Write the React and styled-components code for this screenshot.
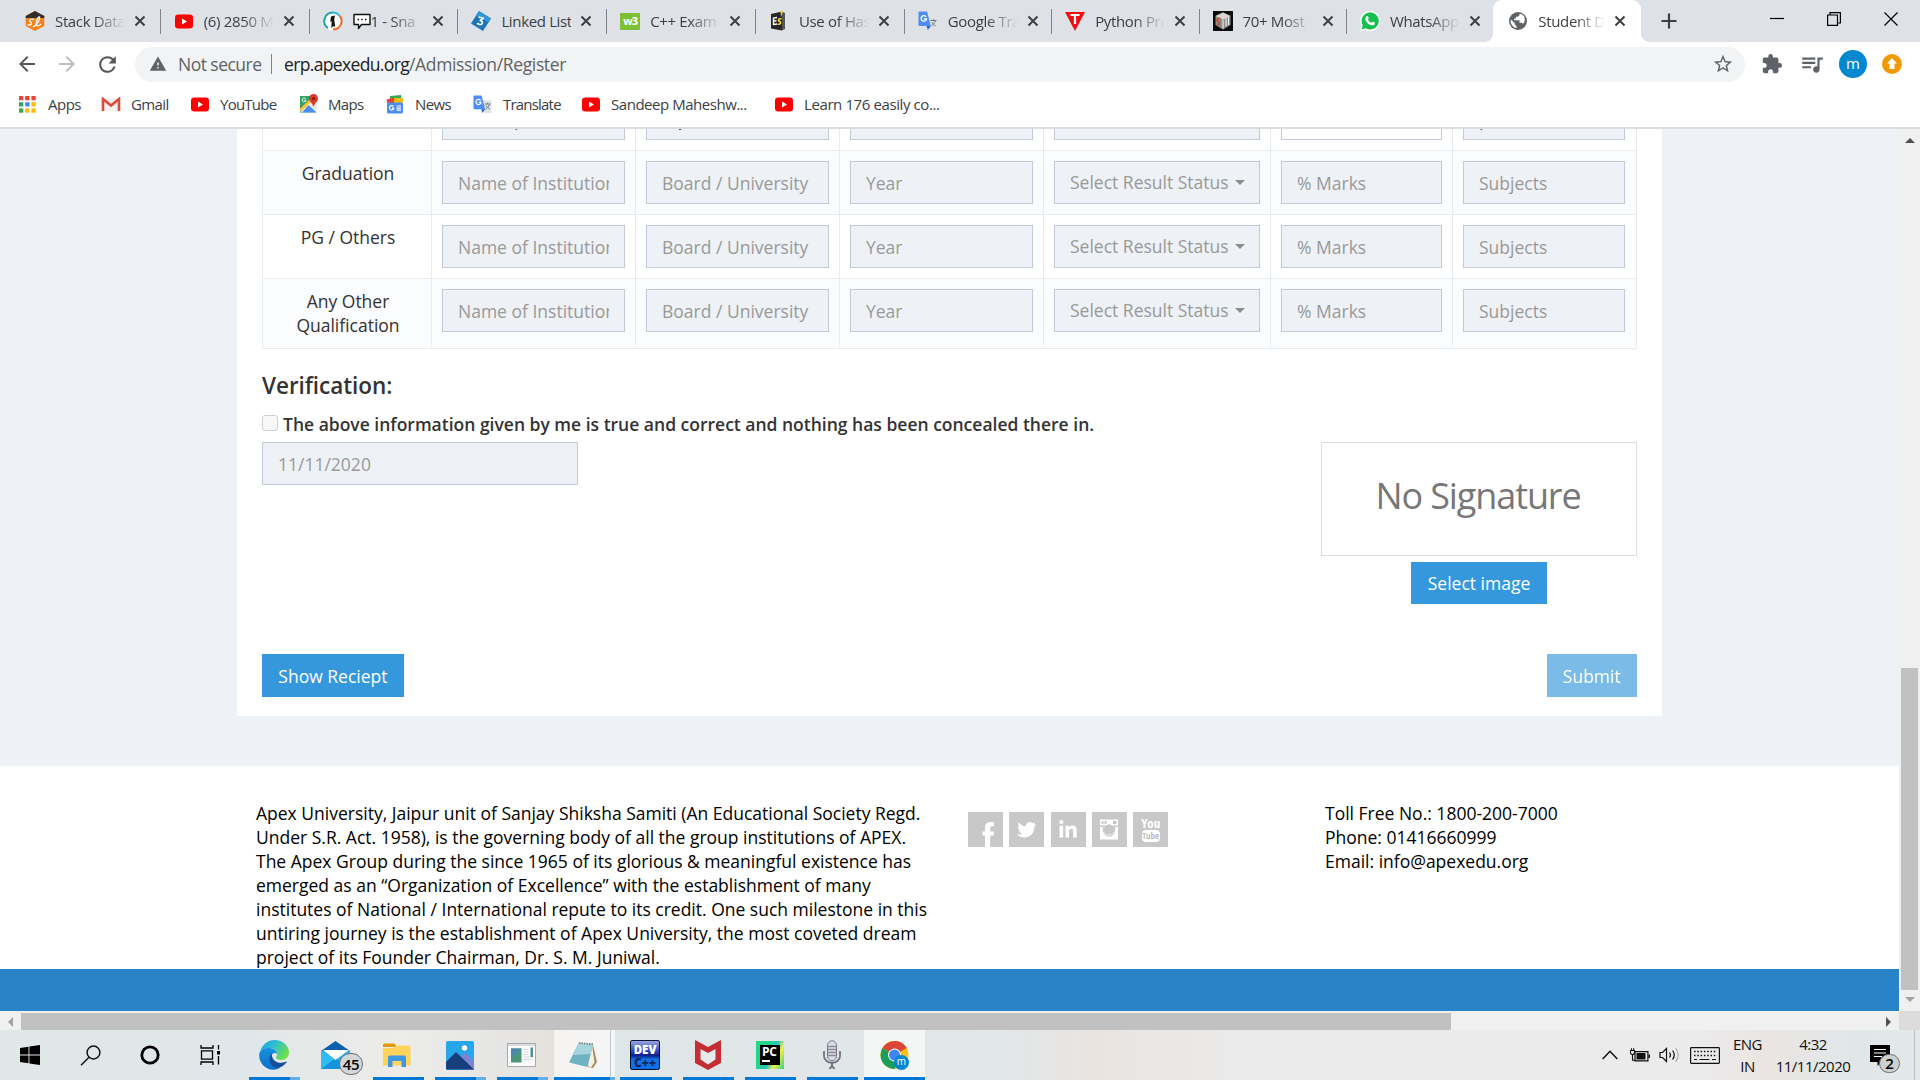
import React from "react";
import styled, { createGlobalStyle, css } from "styled-components";
import {
  MdArrowBack,
  MdArrowForward,
  MdRefresh,
  MdWarning,
  MdStarBorder,
  MdExtension,
  MdQueueMusic,
} from "react-icons/md";
import { FaLinkedinIn } from "react-icons/fa";

const GlobalStyle = createGlobalStyle`
  *, *::before, *::after { box-sizing: border-box; }
  body { margin: 0; font-family: "Open Sans", "Noto Sans", sans-serif; overflow: hidden; }
  svg { display: block; flex: none; }
`;

const Screen = styled.div`
  width: 1920px;
  height: 1080px;
  display: flex;
  flex-direction: column;
  overflow: hidden;
  background: #fff;
`;

/* ---------- browser chrome ---------- */

const TabStrip = styled.div`
  height: 42px;
  flex: none;
  display: flex;
  padding-left: 12px;
  background: #dee1e6;
`;

const Tab = styled.div`
  position: relative;
  width: ${(p) => p.$w}px;
  flex: none;
  display: flex;
  align-items: center;
  padding-left: 13px;
  ${(p) =>
    p.$divider &&
    css`
      &::after {
        content: "";
        position: absolute;
        right: 0;
        top: 9px;
        width: 1px;
        height: 25px;
        background: #80848a;
      }
    `}
  ${(p) =>
    p.$active &&
    css`
      background: #fff;
      border-radius: 9px 9px 0 0;
      padding-left: 15px;
      &::before,
      &::after {
        content: "";
        position: absolute;
        bottom: 0;
        width: 8px;
        height: 8px;
      }
      &::before {
        left: -8px;
        background: radial-gradient(circle at 0 0, transparent 7.5px, #fff 8px);
      }
      &::after {
        right: -8px;
        background: radial-gradient(circle at 100% 0, transparent 7.5px, #fff 8px);
      }
    `}
`;

const Favicon = styled.span`
  width: 20px;
  height: 20px;
  flex: none;
  display: flex;
  align-items: center;
  justify-content: center;
`;

const TabTitle = styled.span`
  width: ${(p) => (p.$active ? 67 : 70)}px;
  margin-left: 10px;
  display: flex;
  align-items: center;
  overflow: hidden;
  white-space: nowrap;
  font-size: 15px;
  line-height: 22px;
  letter-spacing: -0.35px;
  color: #3c4043;
  ${(p) =>
    p.$fade &&
    css`
      mask-image: linear-gradient(90deg, #000 55%, transparent 100%);
    `}
`;

const TabClose = styled.span`
  width: 12px;
  height: 12px;
  margin-left: 9px;
`;

const NewTab = styled.span`
  margin: 13px 0 0 20px;
`;

const WindowButtons = styled.div`
  margin-left: auto;
  width: 172px;
  height: 37px;
  display: flex;
  align-items: center;
`;

const WindowButton = styled.span`
  width: 57px;
  flex: none;
  display: flex;
  justify-content: center;
`;

const Toolbar = styled.div`
  height: 45px;
  flex: none;
  display: flex;
  align-items: center;
  padding: 0 18px 1px 15px;
  color: #5f6368;
`;

const NavButton = styled.span`
  width: 24px;
  margin-right: 16px;
  display: flex;
  justify-content: center;
  color: ${(p) => (p.$off ? "#bbbdc0" : "#54585d")};
`;

const Omnibox = styled.div`
  width: 1610px;
  height: 35px;
  border-radius: 18px;
  background: #f1f3f4;
  display: flex;
  align-items: center;
  padding: 0 11px 1px 14px;
  font-size: 17.5px;
  letter-spacing: -0.53px;
`;

const NotSecure = styled.span`
  margin-left: 11px;
  width: 93px;
`;

const OmniDivider = styled.span`
  width: 1px;
  height: 20px;
  margin-right: 12px;
  background: #80868b;
`;

const Host = styled.span`
  color: #202124;
  letter-spacing: -0.65px;
`;

const UrlPath = styled.span`
  flex: 1;
  letter-spacing: -0.35px;
`;

const ToolIcons = styled.div`
  margin-left: auto;
  display: flex;
  align-items: center;
`;

const ToolIcon = styled.span`
  margin-right: ${(p) => p.$gap}px;
`;

const Avatar = styled.span`
  width: 28px;
  height: 28px;
  border-radius: 50%;
  background: #0288d1;
  color: #fff;
  font-size: 15px;
  line-height: 26px;
  text-align: center;
  margin-right: 15px;
`;

const Bookmarks = styled.div`
  height: 42px;
  flex: none;
  display: flex;
  align-items: center;
  padding: 0 0 6px 19px;
  border-bottom: 2px solid #dadce0;
`;

const Bookmark = styled.span`
  width: ${(p) => p.$w}px;
  height: 22px;
  flex: none;
  display: flex;
  align-items: center;
  gap: ${(p) => p.$gap || 9}px;
  white-space: nowrap;
  font-size: 15px;
  letter-spacing: ${(p) => p.$ls || -0.4}px;
  color: #3c4043;
`;

/* ---------- page ---------- */

const Viewport = styled.div`
  height: 882px;
  flex: none;
  display: flex;
`;

const Page = styled.div`
  width: 1899px;
  height: 882px;
  display: flex;
  flex-direction: column;
  background: #eef1f5;
  color: #333;
  font-size: 17.5px;
  line-height: 24px;
  overflow: hidden;
`;

const Panel = styled.div`
  width: 1425px;
  height: 587px;
  flex: none;
  margin: 0 0 50px 237px;
  padding: 0 25px;
  background: #fff;
  display: flex;
  flex-direction: column;
`;

const Grid = styled.div`
  width: 1375px;
  border: solid #e7ecf1;
  border-width: 0 1px 1px;
  padding-bottom: 1px;
  flex: none;
`;

const GridRow = styled.div`
  display: grid;
  grid-template-columns: 169px 204px 204px 204px 227px 182px 183px;
  height: ${(p) => p.$h}px;
  background: ${(p) => (p.$striped ? "#fbfcfd" : "#fff")};
  border-top: ${(p) => (p.$partial ? 0 : 1)}px solid #e7ecf1;
  align-items: stretch;
  overflow: hidden;
`;

const Cell = styled.div`
  padding: 10px;
  border-right: 1px solid #e7ecf1;
  display: flex;
  flex-direction: column;
  min-width: 0;
  min-height: 0;
  ${(p) => p.$end && "justify-content: flex-end;"}
  &:last-child {
    border-right: 0;
    padding-right: 11px;
  }
`;

const LevelName = styled(Cell)`
  padding: 10px 9px 10px 11px;
  text-align: center;
`;

const fieldBox = css`
  width: 100%;
  height: 43px;
  flex: none;
  border: 1px solid #c2cad8;
  border-radius: 0;
  font: 400 17.5px/24px "Open Sans", "Noto Sans", sans-serif;
  outline: 0;
`;

const Field = styled.input`
  ${fieldBox}
  background: ${(p) => (p.$blank ? "#fff" : "#eef1f5")};
  padding: 1px 15px 0 ${(p) => p.$indent || 15}px;
  color: #555;
  &::placeholder {
    color: #999;
    opacity: 1;
  }
`;

const Select = styled.div`
  ${fieldBox}
  background: #eef1f5;
  color: #999;
  padding: 8px 14px 0 15px;
  display: flex;
  align-items: flex-start;
  justify-content: space-between;
  white-space: nowrap;
`;

const Caret = styled.span`
  margin-top: 10px;
  border: 5px solid transparent;
  border-top-color: #8d8d8d;
  border-bottom: 0;
`;

const Heading = styled.h3`
  margin: 21px 0 0;
  font-size: 22.5px;
  line-height: 32px;
  font-weight: 600;
  letter-spacing: -0.05px;
`;

const Declaration = styled.label`
  margin-top: 9px;
  display: flex;
  align-items: center;
  height: 26px;
  font-weight: 600;
  white-space: nowrap;
`;

const CheckBox = styled.span`
  width: 16px;
  height: 16px;
  margin: 0 5px 2px 0;
  border: 1px solid #d0d0d0;
  border-radius: 3px;
  background: #f8f8f8;
`;

const SignRow = styled.div`
  margin-top: 5px;
  height: 212px;
  flex: none;
  display: flex;
  justify-content: space-between;
`;

const DateField = styled.div`
  width: 316px;
`;

const Signature = styled.div`
  width: 316px;
  display: flex;
  flex-direction: column;
  align-items: center;
  gap: 6px;
`;

const SignatureBox = styled.div`
  width: 316px;
  height: 114px;
  border: 1px solid #ddd;
  display: flex;
  justify-content: center;
  padding: 29px 2px 0 0;
  font-size: 36px;
  line-height: 48px;
  letter-spacing: -1.1px;
  color: #777;
`;

const Button = styled.button`
  height: ${(p) => p.$h || 43}px;
  padding: 0 16.3px;
  border: 0;
  background: #3598dc;
  color: #fff;
  opacity: ${(p) => (p.disabled ? 0.65 : 1)};
  font: 400 17.5px/24px "Open Sans", "Noto Sans", sans-serif;
`;

const Actions = styled.div`
  display: flex;
  justify-content: space-between;
`;

const Footer = styled.footer`
  height: 203px;
  flex: none;
  background: #fff;
  color: #000;
  display: flex;
  padding: 35px 0 0 256px;
`;

const About = styled.p`
  margin: 0;
  width: 712px;
  white-space: nowrap;
`;

const Social = styled.div`
  width: 357px;
  display: flex;
  gap: 6.3px;
  padding-top: 11px;
`;

const SocialTile = styled.span`
  width: 35px;
  height: 35px;
  background: #c8c8c8;
  color: #fff;
  display: flex;
  align-items: center;
  justify-content: center;
  overflow: hidden;
`;

const YouTubeMark = styled.span`
  display: flex;
  flex-direction: column;
  align-items: center;
  font: 700 13px/12px "Open Sans", sans-serif;
  font-stretch: 75%;
`;

const Tube = styled.span`
  margin-top: 1px;
  width: 18px;
  height: 12px;
  border-radius: 4px;
  background: #fff;
  color: #bdbdbd;
  font-size: 9px;
  line-height: 11px;
  text-align: center;
`;

const Contact = styled.div``;

const BlueBar = styled.div`
  height: 42px;
  flex: none;
  background: #2884c6;
`;

const VScroll = styled.div`
  width: 21px;
  background: #f0f0f0;
  display: flex;
  flex-direction: column;
  align-items: center;
`;

const VThumb = styled.div`
  width: 17px;
  height: 322px;
  margin: 525px 0 7px;
  background: #c1c1c1;
`;

const HScroll = styled.div`
  height: 19px;
  flex: none;
  display: flex;
  background: #f0f0f0;
`;

const HThumb = styled.div`
  width: 1430px;
  flex: none;
  margin: 2px 420px 0 8px;
  background: #c1c1c1;
`;

const ScrollArrow = styled.span`
  width: 0;
  height: 0;
  border: 5px solid transparent;
  ${(p) => p.$dir === "up" && "margin-top: 9px; border-bottom-color: #505050; border-top: 0;"}
  ${(p) => p.$dir === "down" && "border-top-color: #a3a3a3; border-bottom: 0;"}
  ${(p) => p.$dir === "left" && "margin: 6px 0 0 8px; border-right-color: #a3a3a3; border-left: 0;"}
  ${(p) => p.$dir === "right" && "margin: 6px 8px 0 15px; border-left-color: #505050; border-right: 0;"}
`;

const ScrollCorner = styled.span`
  width: 21px;
  margin-left: auto;
  background: #dcdcdc;
`;

/* ---------- taskbar ---------- */

const Taskbar = styled.div`
  height: 50px;
  flex: none;
  display: flex;
  background: linear-gradient(
    90deg,
    #e0e7e7 0,
    #dfe7ea 240px,
    #e6e8e8 300px,
    #ececea 400px,
    #e5e4e2 520px,
    #e6e0da 555px,
    #dfe6e8 620px,
    #e1e7e8 860px,
    #e2e7e8 1000px,
    #e9e4e0 1100px,
    #ebebeb 1250px,
    #ebebeb 1700px,
    #eae5e2 1770px,
    #e0e7e9 1860px,
    #e3e9ea 1920px
  );
`;

const TaskButton = styled.span`
  position: relative;
  width: ${(p) => p.$w || 62}px;
  height: 50px;
  flex: none;
  display: flex;
  align-items: center;
  justify-content: center;
  padding-right: ${(p) => p.$shift || 0}px;
  background: ${(p) => (p.$active ? "rgba(255,255,255,.62)" : "transparent")};
  ${(p) =>
    p.$line &&
    css`
      &::after {
        content: "";
        position: absolute;
        left: ${p.$active ? 0 : 5}px;
        right: ${p.$active ? 0 : 6}px;
        bottom: 0;
        height: 3px;
        background: ${p.$line === "multi"
          ? `linear-gradient(90deg, #0078d7 ${p.$active ? 92 : 80}%, #63aee6 ${p.$active ? 92 : 80}%)`
          : "#0078d7"};
      }
    `}
`;

const StackEdge = styled.span`
  position: absolute;
  right: 4px;
  top: 0;
  bottom: 0;
  width: 1px;
  background: #c4c9cc;
`;

const CountBadge = styled.span`
  position: absolute;
  left: ${(p) => p.$x}px;
  top: ${(p) => p.$y}px;
  width: ${(p) => p.$d}px;
  height: ${(p) => p.$d - 2}px;
  border: 1px solid #6c7072;
  border-radius: 12px;
  background: ${(p) => p.$bg};
  color: #000;
  text-align: center;
  font-size: 15px;
  font-weight: 600;
  letter-spacing: -0.3px;
  line-height: ${(p) => p.$d - 4}px;
`;

const Tray = styled.div`
  margin-left: auto;
  height: 50px;
  display: flex;
  align-items: center;
  color: #111;
`;

const TrayIcon = styled.span`
  margin-right: ${(p) => p.$gap}px;
`;

const TrayText = styled.span`
  width: ${(p) => p.$w}px;
  text-align: center;
  font-size: 15px;
  line-height: 22px;
  letter-spacing: -0.5px;
  padding-bottom: 1px;
`;

const Notify = styled.span`
  position: relative;
  width: 45px;
  height: 50px;
  margin: 0 5px 0 9px;
  padding-top: 15px;
  border-right: 1px solid #b9bfc2;
`;

/* ---------- icons ---------- */

const Svg = ({ w = 20, h, vb, children, ...rest }) => (
  <svg width={w} height={h || w} viewBox={vb || `0 0 ${w} ${h || w}`} fill="none" {...rest}>
    {children}
  </svg>
);

const YouTube = () => (
  <Svg w={18} h={15}>
    <rect width="18" height="14" y=".5" rx="3.2" fill="#f00" />
    <path d="M7 4.6v6l5-3z" fill="#fff" />
  </Svg>
);

const StackLearn = () => (
  <Svg>
    <path d="M10 0l9.3 5v10L10 20 .7 15V5z" fill="#f58220" />
    <path d="M10 0l9.3 5v2H.7V5z" fill="#2f2f2f" />
    <path
      d="M8.500 8.500c-3-1-5 1-3 2.500s.8 4-2.500 2.900M8.500 15.500c3-.8 7-7.500 6-9.500-1-1.200-3.300 3.500-3.300 6.500 0 2.800 2.500 3 4.300.8"
      stroke="#fff"
      strokeWidth="1.300"
      strokeLinecap="round"
    />
  </Svg>
);

const Snap = () => (
  <Svg>
    <circle cx="10" cy="10" r="9.500" fill="#fff" />
    <path d="M10 1.500A8.500 8.500 0 0 0 5 17" stroke="#18a7a0" strokeWidth="2" />
    <path d="M10 1.500a8.500 8.500 0 0 1 6.500 3" stroke="#35b6e8" strokeWidth="2" />
    <path d="M16.500 4.500A8.500 8.500 0 0 1 10 18.500" stroke="#f0692a" strokeWidth="2" />
    <path d="M8 5.500l4-1-.8 4 1 7.500-2-1-2 2 .6-7-1.600 1z" fill="#111" />
  </Svg>
);

const ChatBubble = () => (
  <Svg w={18} h={17}>
    <path
      d="M1 1.500h16v10H8.500L5.500 15.500v-4H1z"
      fill="#fff"
      stroke="#111"
      strokeWidth="1.400"
      strokeLinejoin="round"
    />
    <path d="M4.500 6.500h1.500M8.200 6.500h1.500M12 6.500h1.500" stroke="#111" strokeWidth="1.400" />
  </Svg>
);

const LinkedFav = () => (
  <Svg>
    <path d="M8 0l12 7.500L12 20 0 12.500z" fill="#1a75bb" />
    <path d="M8 0l12 7.500-2.500 4L5 4.500z" fill="#2f97d6" />
    <path
      d="M7.500 6l5 1.200-3.300 2.300c3 .4 2.800 4.200-.2 4-1.200 0-2.200-.6-2.700-1.500"
      stroke="#fff"
      strokeWidth="1.600"
      strokeLinejoin="round"
    />
  </Svg>
);

const FavText = styled.span`
  width: 20px;
  height: ${(p) => p.$h || 20}px;
  border-radius: 1px;
  background: ${(p) => p.$bg};
  color: #fff;
  text-align: center;
  font: 700 ${(p) => p.$fs || 12}px / ${(p) => (p.$h || 20) - 1}px "Open Sans", sans-serif;
  letter-spacing: -0.8px;
`;

const EsFav = () => (
  <Svg>
    <path d="M2 3l11-2.500v19L2 17.500z" fill="#262626" />
    <path d="M13 .5l3 1.500v16l-3 1.500z" fill="#555" />
    <path d="M11.500 0l2.500 0-2 6z" fill="#f6dd1e" />
    <path d="M8 6.500L4.500 7v6.500l3.500-.5M4.500 10l3-.3" stroke="#fff" strokeWidth="1.400" />
    <path d="M12.500 8c-3-.8-4 1.500-2 2.400 2 1 1 3.400-2 2.800" stroke="#f6dd1e" strokeWidth="1.600" />
  </Svg>
);

const Translate = ({ s = 20 }) => (
  <Svg w={s} vb="0 0 20 20">
    <path d="M8 5.500h10.500a1 1 0 0 1 1 1V18a1 1 0 0 1-1 1H12z" fill="#dfe1e3" />
    <path d="M12.500 9.500h6M15.400 8.200v1.300M17.300 9.700c-.6 2.500-2.200 4.300-4 5.300M13.800 10.800c.8 2 2 3.200 3.800 4.200" stroke="#69788a" />
    <path d="M1.500 .5H9l3.800 14.500h-11.300a1 1 0 0 1-1-1V1.500a1 1 0 0 1 1-1z" fill="#4d8df6" />
    <path d="M8.600 15h4.200L9.800 19z" fill="#2c62cc" />
    <path d="M8 5.800A2.700 2.700 0 1 0 8.500 7.800H6" stroke="#fff" strokeWidth="1.300" />
  </Svg>
);

const PythonFav = () => (
  <Svg>
    <path d="M0 1h20L10 20z" fill="#f20d12" />
    <path d="M5.500 4h9M10 4v9" stroke="#fff" strokeWidth="2.200" />
  </Svg>
);

const CubeFav = () => (
  <Svg>
    <path d="M0 0h20v20H0z" fill="#0b0b0b" />
    <path d="M10 1.500l7.500 3.500v9L10 18.500 2.500 14V5z" fill="#8c8c8c" />
    <path d="M10 1.500l7.500 3.500L10 8.500 2.500 5z" fill="#d9d6d2" />
    <path d="M7.500 7.500C4 7 3 9.500 5.200 10.800s1.500 3.600-1.200 2.700" stroke="#d8452c" strokeWidth="1.500" />
    <path d="M10 8.500v9M13 7v8.500M15.500 6v8" stroke="#f1f1f1" strokeWidth="1.100" />
  </Svg>
);

const WhatsAppFav = () => (
  <Svg>
    <path d="M0 20l1.400-5.200A10 10 0 1 1 5.300 18.700z" fill="#fff" />
    <path d="M1.500 18.500l1.200-4.300a8.600 8.600 0 1 1 3 3.100z" fill="#14c04b" />
    <path
      d="M6.600 5.200c.6-.5 1.100-.3 1.400.3l.7 1.600c.2.500-.6 1.200-.8 1.400.7 1.500 1.900 2.600 3.500 3.300.4-.3 1-1.300 1.500-1.100l1.700.9c.5.3.3 1.300-.1 1.800-1 1.200-2.600 1.200-4.500.4-2.300-1-3.900-3-4.500-4.800-.5-1.500.1-3 1.100-3.800z"
      fill="#fff"
    />
  </Svg>
);

const GlobeFav = () => (
  <Svg>
    <circle cx="10" cy="10" r="9" fill="#5f6368" />
    <path d="M2.800 8.500l4 3.800v1.200l1.700 1.500v2.300c-3.500-.8-6.500-4.500-5.700-8.800z" fill="#fff" />
    <path d="M11.500 2.800v1.400L9.800 5.800H8v1.700H6.200v1.700h5.300v2.600h1.800c.8 0 1.500.5 1.700 1.200 2-2.300 2.300-5.600.9-8.100-.9-1-2.400-1.900-4.400-2.100z" fill="#fff" />
  </Svg>
);

const CloseX = () => (
  <Svg w={12}>
    <path d="M1.500 1.500l9 9M10.500 1.500l-9 9" stroke="#3c4043" strokeWidth="2" />
  </Svg>
);

const AppsGrid = () => (
  <Svg w={17}>
    {["#ea4335", "#ea4335", "#ea4335", "#34a853", "#4285f4", "#fbbc05", "#34a853", "#fbbc05", "#fbbc05"].map((c, i) => (
      <rect key={i} x={(i % 3) * 6.2} y={Math.floor(i / 3) * 6.2} width="4.300" height="4.300" fill={c} />
    ))}
  </Svg>
);

const Gmail = () => (
  <Svg w={20} h={15}>
    <path d="M1 1h18v13H1z" fill="#f3f1ef" />
    <path d="M2 14V2l8 6.500L18 2v12" stroke="#dc4a3d" strokeWidth="2.600" />
  </Svg>
);

const Maps = () => (
  <Svg>
    <path d="M1 2h16v16.500H1z" fill="#34a162" />
    <path d="M1 16.500L14 4l4 5v9.500H3z" fill="#e8eaec" />
    <path d="M9.500 11l8 7.500H3z" fill="#4b8df5" />
    <path d="M1 16.500L14 4" stroke="#fbc02d" strokeWidth="2.500" />
    <path d="M14.500 0a4.500 4.500 0 0 1 4.500 4.500c0 3-3.500 4.500-4.500 8.500-1-4-4.500-5.500-4.500-8.500A4.500 4.500 0 0 1 14.500 0z" fill="#e0392b" />
    <circle cx="14.500" cy="4.500" r="1.600" fill="#8b1a12" />
    <path d="M6.800 5A1.900 1.900 0 1 0 7 6.300H5.500" stroke="#fff" strokeWidth="1" />
  </Svg>
);

const News = () => (
  <Svg w={18} h={19}>
    <path d="M4 1l11-1 1 8H4z" fill="#34a853" />
    <path d="M.5 4.500l8-2 2 6H1.500z" fill="#ea4335" />
    <path d="M8 3h9.500l-1 6H8z" fill="#fbbc05" />
    <rect x="1" y="7.500" width="16" height="11" rx="1.500" fill="#4d8df6" />
    <path d="M7.300 11.300A2.200 2.200 0 1 0 7.800 13.100H6M10.500 11H15M10.500 13.100H15M10.500 15.200H15" stroke="#fff" strokeWidth="1.200" />
  </Svg>
);

const WinLogo = () => (
  <Svg w={20}>
    <path d="M0 3l8.500-1.300v7.800H0zM9.400 1.500L20 0v9.500H9.400zM0 10.500h8.500v7.800L0 17zM9.400 10.500H20V20L9.400 18.400z" fill="#000" />
  </Svg>
);

const Search = () => (
  <Svg w={21}>
    <circle cx="13.500" cy="7.500" r="6.400" stroke="#111" strokeWidth="1.500" />
    <path d="M9 12.200L1 20.200" stroke="#111" strokeWidth="1.500" />
  </Svg>
);

const Cortana = () => (
  <Svg w={20}>
    <circle cx="10" cy="10" r="8.200" stroke="#000" strokeWidth="2.800" />
  </Svg>
);

const TaskView = () => (
  <Svg w={21} h={20}>
    <path d="M1 0v3h12V0M1 20v-3h12v3M1.500 5.800h11v8.400h-11zM18.500 0v4.500M18.500 11v8.500" stroke="#000" strokeWidth="1.300" />
    <path d="M17 6h3v3.500h-3z" fill="#000" />
  </Svg>
);

const Edge = () => (
  <Svg w={30}>
    <defs>
      <linearGradient id="edgeTop" x1="0" y1="0" x2="1" y2=".5">
        <stop offset="0" stopColor="#1c9fe0" />
        <stop offset=".5" stopColor="#2fc0d0" />
        <stop offset="1" stopColor="#6be04a" />
      </linearGradient>
      <linearGradient id="edgeLow" x1="0" y1="0" x2="0" y2="1">
        <stop offset="0" stopColor="#1590df" />
        <stop offset="1" stopColor="#0c6fc9" />
      </linearGradient>
    </defs>
    <path d="M1 12C3 4.500 9 0 15.500 0 24 0 30 6 30 12.500c0 4.500-3.500 7.500-7.500 7.500-3.500 0-5.500-1.300-5.500-2.300 0-.8 1.200-1.400 1.200-3.700 0-3-3.200-6-8.200-6-4.500 0-7.500 2-9 4z" fill="url(#edgeTop)" />
    <path d="M.5 12.500C2.500 9.500 6 7.600 10.500 8c4 .3 7.500 2.800 7.700 6-1.500-2-6.200-1.200-6.200 4 0 6 5.500 9.500 9.500 9.300-2 1.700-4.500 2.500-7 2.500C6 29.800-1.500 22 .5 12.500z" fill="url(#edgeLow)" />
    <path d="M12.500 13.500c-3 3-2.800 9 1 12.500 4 3.500 9.500 2 14-3.500.5-.7 0-1.100-.7-.8-6.500 2.800-13.800.3-14.300-8.200z" fill="#11509c" />
  </Svg>
);

const Mail = () => (
  <Svg w={31} h={29}>
    <path d="M1 10L15.500 0 30 10z" fill="#0c5fae" />
    <path d="M1 10h29v18H1z" fill="#27b1ea" />
    <path d="M1 28l14.500-11L30 28z" fill="#1593dd" />
    <path d="M3 9h26L15.500 19z" fill="#fff" />
    <path d="M1 10v18L14 18z" fill="#30bdf2" />
  </Svg>
);

const Explorer = () => (
  <Svg w={28} h={24}>
    <path d="M0 2a1.500 1.500 0 0 1 1.500-1.500h10L14 4H0z" fill="#dd9a05" />
    <path d="M0 5h10.500L13 2.500h13A1.500 1.500 0 0 1 27.500 4v18.500H0z" fill="#ffd35c" />
    <path d="M5 24V14.500a2 2 0 0 1 2-2h14a2 2 0 0 1 2 2V24h-4.500v-6h-9v6z" fill="#3f97df" />
  </Svg>
);

const Photos = () => (
  <Svg w={28} h={29}>
    <rect width="28" height="29" rx="1.500" fill="#27a7ea" />
    <path d="M14 17l5-5.500 9 8.500v9h-9z" fill="#7a86d4" />
    <path d="M0 21l10-10 18 17.500H1.500A1.500 1.500 0 0 1 0 27z" fill="#183f7d" />
    <circle cx="18.500" cy="7" r="2.700" fill="#fff" />
  </Svg>
);

const WindowApp = () => (
  <Svg w={29} h={24}>
    <rect x=".5" y=".5" width="28" height="23" fill="#fbfbfb" stroke="#a8abad" />
    <path d="M1 1h27v1.800H1z" fill="#d5d9dd" />
    <path d="M4 5.500h10.500v14H4z" fill="#4a9778" />
    <path d="M4 5.500h10.500L4 16z" fill="#4c86a8" />
    <path d="M16.500 6.500h5M16.500 9h5M16.500 11.500h5M16.500 14h8M16.500 16.500h8" stroke="#d5d8da" />
    <path d="M23.500 4.500H26v9.500h-2.500z" fill="#4d8f95" />
  </Svg>
);

const Notepad = () => (
  <Svg w={29} h={27}>
    <path d="M24 3l4 17-4 6-5-1z" fill="#a58a60" />
    <path d="M23 3l2.500 17.500-4 5.500-3-3z" fill="#f5f1e6" />
    <path d="M9.500 1.500L24 2.500 18.500 25 0 20.500z" fill="#6fb2c1" />
    <path d="M9.500 1.500L24 2.500 21.500 12 4.500 13z" fill="#a5d5dd" />
    <path d="M10 1l14 1.200" stroke="#6d7b80" strokeWidth="1.600" strokeDasharray="1.500 1" />
  </Svg>
);

const DevTile = styled.span`
  width: 30px;
  height: 30px;
  border: 1px solid #0a1030;
  border-radius: 2px;
  background: linear-gradient(#9aa4de 0, #2a3fb0 40%, #0b1f87 52%, #1173e6 66%, #0f6fe2 100%);
  display: flex;
  flex-direction: column;
  align-items: center;
  justify-content: space-between;
  overflow: hidden;
  color: #fff;
  font: 800 11.5px/13px "Open Sans", sans-serif;
  padding: 2px 0 0;
`;

const DevPlus = styled.span`
  color: #0a225e;
  font-size: 12px;
  line-height: 13px;
  font-weight: 800;
`;

const McAfee = () => (
  <Svg w={26} h={30}>
    <path d="M0 0l13 7 13-7v23l-13 7-13-7z" fill="#c22e31" />
    <path d="M5.500 9l7.500 4 7.500-4v10.500l-7.500 5-7.500-5z" fill="#e8e9ea" />
  </Svg>
);

const PyTile = styled.span`
  width: 28px;
  height: 28px;
  display: flex;
  background: linear-gradient(115deg, #21d789 0 35%, #1fc8c0 55%, #f4ee4a 72%, #21d789 100%);
  padding: 4px;
`;

const PyInner = styled.span`
  width: 21px;
  height: 20px;
  background: #000;
  color: #fff;
  font: 700 12px/13px "Open Sans", sans-serif;
  letter-spacing: -0.3px;
  padding-left: 2px;
  &::after {
    content: "";
    display: block;
    width: 8px;
    height: 2px;
    margin-top: 2px;
    background: #fff;
  }
`;

const Mic = () => (
  <Svg w={18} h={30}>
    <path d="M1 11v5c0 9 16 9 16 0v-5" stroke="#74757f" strokeWidth="1.800" />
    <rect x="4.500" y=".8" width="9" height="20" rx="4.500" fill="#dcdce4" stroke="#777884" />
    <path d="M5 6.500h8M5 9.500h8M5 12.500h8M5 15.500h8" stroke="#8c8d99" strokeWidth="1.300" />
    <path d="M9 23v4M6.500 29l2.500-3 2.500 3" stroke="#6d6e78" strokeWidth="1.800" />
  </Svg>
);

const Chrome = () => (
  <Svg w={30}>
    <circle cx="14.500" cy="15" r="14" fill="#fbc116" />
    <path d="M14.500 15L2.400 8A14 14 0 0 1 26.600 8z" fill="#dc4437" />
    <path d="M14.500 8h12.100A14 14 0 0 0 14.500 1z" fill="#dc4437" />
    <path d="M2.400 8A14 14 0 0 0 14.500 29l6-10.500-6-3.500z" fill="#1a9f5a" />
    <circle cx="14.500" cy="15" r="6.500" fill="#fff" />
    <circle cx="14.500" cy="15" r="5.500" fill="#4285f4" />
  </Svg>
);

const ChromeBadge = styled.span`
  position: absolute;
  right: 16px;
  bottom: 10px;
  width: 15px;
  height: 15px;
  border-radius: 50%;
  background: #0288d1;
  color: #fff;
  font-size: 10px;
  line-height: 13px;
  text-align: center;
`;

const InstagramMark = () => (
  <Svg w={20} h={21}>
    <path d="M1 .5h18v20H1z" fill="#fff" />
    <path d="M2.500 2h2v3h-2zM5.500 2h2v3h-2zM14 2h3.500v3H14zM1 6.500h5.500c-3.500 4-1 10 3.500 10s7-6 3.500-10H19V8h-3c1 5-2 9.800-6 9.800S3 13 4 8H1z" fill="#c8c8c8" />
    <circle cx="10" cy="10.500" r="5.300" fill="#c8c8c8" />
  </Svg>
);

const TwitterBird = () => (
  <Svg w={35}>
    <path
      d="M8 22.500c2.500.2 4-.4 5-1.300-1.700-.3-2.800-1.200-3.200-2.600h1.500c-1.700-.8-2.500-2.100-2.500-3.900l1.500.4c-1.200-1.500-1.500-3-.6-4.600 2.200 2.300 4.300 3.500 7 3.800.1-2.700 1.500-4.300 3.700-4.300 1.500 0 2.300.5 3 1.200l2.800-1-1.200 2.300 2.500-.4-2 2.200c.1 6.500-4 11-9.700 11.200-3.200.1-5.800-.9-7.800-3z"
      fill="#fff"
    />
  </Svg>
);

/* ---------- data ---------- */

const tabs = [
  { icon: <StackLearn />, title: "Stack Data", fade: true, w: 148.8 },
  { icon: <YouTube />, title: "(6) 2850 M", fade: true, w: 148.8 },
  { icon: <Snap />, title: "1 - Sna", lead: <ChatBubble />, fade: true, w: 148.8 },
  { icon: <LinkedFav />, title: "Linked List", w: 148.8 },
  { icon: <FavText $bg="#7dc133" $h={17} $fs={11}>w3</FavText>, title: "C++ Exam", fade: true, w: 148.8 },
  { icon: <EsFav />, title: "Use of Has", fade: true, w: 148.8 },
  { icon: <Translate />, title: "Google Tra", fade: true, w: 147.4 },
  { icon: <PythonFav />, title: "Python Pro", fade: true, w: 147.4 },
  { icon: <CubeFav />, title: "70+ Most", fade: true, w: 147.4 },
  { icon: <WhatsAppFav />, title: "WhatsApp", fade: true, w: 146.4 },
  { icon: <GlobeFav />, title: "Student D", fade: true, active: true, w: 148 },
];

const bookmarks = [
  { icon: <AppsGrid />, label: "Apps", w: 82, gap: 12, ls: -0.5 },
  { icon: <Gmail />, label: "Gmail", w: 90, gap: 10, ls: -0.6 },
  { icon: <YouTube />, label: "YouTube", w: 108, gap: 11, ls: -0.75 },
  { icon: <Maps />, label: "Maps", w: 87, gap: 9, ls: -0.7 },
  { icon: <News />, label: "News", w: 87, gap: 11, ls: -0.6 },
  { icon: <Translate s={19} />, label: "Translate", w: 109, gap: 11, ls: -0.8 },
  { icon: <YouTube />, label: "Sandeep Maheshw...", w: 193, gap: 11, ls: -0.46 },
  { icon: <YouTube />, label: "Learn 176 easily co...", w: 170, gap: 11, ls: -0.4 },
];

const levels = [
  { name: ["Graduation"], h: 64, striped: true },
  { name: ["PG / Others"], h: 64 },
  { name: ["Any Other", "Qualification"], h: 69, striped: true },
];

const about = [
  "Apex University, Jaipur unit of Sanjay Shiksha Samiti (An Educational Society Regd.",
  "Under S.R. Act. 1958), is the governing body of all the group institutions of APEX.",
  "The Apex Group during the since 1965 of its glorious & meaningful existence has",
  "emerged as an “Organization of Excellence” with the establishment of many",
  "institutes of National / International repute to its credit. One such milestone in this",
  "untiring journey is the establishment of Apex University, the most coveted dream",
  "project of its Founder Chairman, Dr. S. M. Juniwal.",
];

const Lines = ({ of }) =>
  of.map((line) => (
    <React.Fragment key={line}>
      {line}
      <br />
    </React.Fragment>
  ));

/* ---------- sections ---------- */

const BrowserChrome = () => (
  <>
    <TabStrip>
      {tabs.map((t, i) => (
        <Tab key={t.title} $w={t.w} $active={t.active} $divider={i < 9}>
          <Favicon>{t.icon}</Favicon>
          <TabTitle $fade={t.fade} $active={t.active}>
            {t.lead}
            {t.title}
          </TabTitle>
          <TabClose>
            <CloseX />
          </TabClose>
        </Tab>
      ))}
      <NewTab>
        <Svg w={16}>
          <path d="M8 .5v15M.5 8h15" stroke="#3c4043" strokeWidth="2.200" />
        </Svg>
      </NewTab>
      <WindowButtons>
        <WindowButton>
          <Svg w={14}>
            <path d="M0 6.500h14" stroke="#000" strokeWidth="1.200" />
          </Svg>
        </WindowButton>
        <WindowButton>
          <Svg w={14}>
            <path d="M.6 3h9.900v10.400H.6zM3 3V.6h10.400V11h-2.700" stroke="#000" strokeWidth="1.200" />
          </Svg>
        </WindowButton>
        <WindowButton>
          <Svg w={14}>
            <path d="M.5.5l13 13M13.500.5l-13 13" stroke="#000" strokeWidth="1.200" />
          </Svg>
        </WindowButton>
      </WindowButtons>
    </TabStrip>
    <Toolbar>
      <NavButton>
        <MdArrowBack size={24} />
      </NavButton>
      <NavButton $off>
        <MdArrowForward size={24} />
      </NavButton>
      <NavButton>
        <MdRefresh size={25} />
      </NavButton>
      <Omnibox>
        <MdWarning size={18} />
        <NotSecure>Not secure</NotSecure>
        <OmniDivider />
        <Host>erp.apexedu.org</Host>
        <UrlPath>/Admission/Register</UrlPath>
        <MdStarBorder size={22} />
      </Omnibox>
      <ToolIcons>
        <ToolIcon $gap={16}>
          <MdExtension size={22} />
        </ToolIcon>
        <ToolIcon $gap={14}>
          <MdQueueMusic size={26} />
        </ToolIcon>
        <Avatar>m</Avatar>
        <Svg w={20}>
          <circle cx="10" cy="10" r="10" fill="#f29900" />
          <path d="M10 4l5 5.500h-2.500V15h-5V9.500H5z" fill="#fff" />
        </Svg>
      </ToolIcons>
    </Toolbar>
    <Bookmarks>
      {bookmarks.map((b) => (
        <Bookmark key={b.label} $w={b.w} $gap={b.gap} $ls={b.ls}>
          {b.icon}
          {b.label}
        </Bookmark>
      ))}
    </Bookmarks>
  </>
);

const Qualifications = () => (
  <Grid>
    <GridRow $h={21} $partial>
      <Cell $end />
      <Cell $end>
        <Field defaultValue="p" $indent={71} />
      </Cell>
      <Cell $end>
        <Field defaultValue="j" $indent={32} />
      </Cell>
      <Cell $end>
        <Field />
      </Cell>
      <Cell $end>
        <Select />
      </Cell>
      <Cell $end>
        <Field $blank />
      </Cell>
      <Cell $end>
        <Field defaultValue="p" />
      </Cell>
    </GridRow>
    {levels.map((l) => (
      <GridRow key={l.name[0]} $h={l.h} $striped={l.striped}>
        <LevelName>
          {l.name.map((n) => (
            <span key={n}>{n}</span>
          ))}
        </LevelName>
        <Cell>
          <Field placeholder="Name of Institution" disabled />
        </Cell>
        <Cell>
          <Field placeholder="Board / University" disabled />
        </Cell>
        <Cell>
          <Field placeholder="Year" disabled />
        </Cell>
        <Cell>
          <Select>
            Select Result Status
            <Caret />
          </Select>
        </Cell>
        <Cell>
          <Field placeholder="% Marks" disabled />
        </Cell>
        <Cell>
          <Field placeholder="Subjects" disabled />
        </Cell>
      </GridRow>
    ))}
  </Grid>
);

const SiteFooter = () => (
  <Footer>
    <About>
      <Lines of={about} />
    </About>
    <Social>
      <SocialTile>
        <Svg w={35}>
          <path d="M17 35V23.500h-2.500V19.500H17V16c0-4 2-6 5.500-6H26v4.200h-2c-1.300 0-1.800.6-1.800 1.900v3.400H26l-.5 4h-3.300V35z" fill="#fff" />
        </Svg>
      </SocialTile>
      <SocialTile>
        <TwitterBird />
      </SocialTile>
      <SocialTile>
        <FaLinkedinIn size={20} />
      </SocialTile>
      <SocialTile>
        <InstagramMark />
      </SocialTile>
      <SocialTile>
        <YouTubeMark>
          You
          <Tube>Tube</Tube>
        </YouTubeMark>
      </SocialTile>
    </Social>
    <Contact>
      <Lines of={["Toll Free No.: 1800-200-7000", "Phone: 01416660999", "Email: info@apexedu.org"]} />
    </Contact>
  </Footer>
);

const WindowsTaskbar = () => (
  <Taskbar>
    <TaskButton $w={60}>
      <WinLogo />
    </TaskButton>
    <TaskButton $w={61} $shift={1}>
      <Search />
    </TaskButton>
    <TaskButton $w={58}>
      <Cortana />
    </TaskButton>
    <TaskButton $w={65} $shift={2}>
      <TaskView />
    </TaskButton>
    <TaskButton $line="multi" $w={62} $shift={2}>
      <Edge />
    </TaskButton>
    <TaskButton $w={62} $shift={3}>
      <Mail />
      <CountBadge $x={33} $y={23} $d={24} $bg="#d3d6d7">
        45
      </CountBadge>
    </TaskButton>
    <TaskButton $line="single" $shift={4}>
      <Explorer />
    </TaskButton>
    <TaskButton $line="multi" $shift={2}>
      <Photos />
    </TaskButton>
    <TaskButton $line="multi" $shift={3}>
      <WindowApp />
    </TaskButton>
    <TaskButton $line="multi" $active $w={61} $shift={2}>
      <Notepad />
      <StackEdge />
    </TaskButton>
    <TaskButton $line="single" $w={63} $shift={3}>
      <DevTile>
        DEV
        <DevPlus>C++</DevPlus>
      </DevTile>
    </TaskButton>
    <TaskButton $line="single" $shift={2}>
      <McAfee />
    </TaskButton>
    <TaskButton $line="single" $shift={2}>
      <PyTile>
        <PyInner>PC</PyInner>
      </PyTile>
    </TaskButton>
    <TaskButton $line="single" $shift={2}>
      <Mic />
    </TaskButton>
    <TaskButton $line="single" $active $w={61}>
      <Chrome />
      <ChromeBadge>m</ChromeBadge>
    </TaskButton>
    <Tray>
      <TrayIcon $gap={12}>
        <Svg w={16} h={10}>
          <path d="M.7 9L8 1.300 15.300 9" stroke="#111" strokeWidth="1.500" />
        </Svg>
      </TrayIcon>
      <TrayIcon $gap={9}>
        <Svg w={20} h={14}>
          <path d="M5 3.600h12.900v9.200H5z" stroke="#111" strokeWidth="1.200" />
          <path d="M6.500 5h9v6.500h-9zM18.500 6.500H20v3.500h-1.500z" fill="#111" />
          <path d="M.5 2.500h4v2a2 2 0 0 1-4 0zM1.500.3v2M3.700.3v2M2.500 6.500v5.800H5" stroke="#111" strokeWidth="1.100" />
        </Svg>
      </TrayIcon>
      <TrayIcon $gap={10}>
        <Svg w={21} h={16}>
          <path d="M1 5.500h2.500l4-4v13l-4-4H1z" stroke="#111" strokeWidth="1.200" />
          <path d="M10.500 5.500q2 2.500 0 5M13.500 3.500q3.500 4.500 0 9" stroke="#111" strokeWidth="1.200" />
          <path d="M16.500 1q5.500 7 0 14" stroke="#aaa" strokeWidth="1.200" />
        </Svg>
      </TrayIcon>
      <TrayIcon $gap={10}>
        <Svg w={30} h={17}>
          <rect x=".6" y=".6" width="28.800" height="15.800" rx=".8" stroke="#111" strokeWidth="1.200" />
          <path d="M4 4.500h22M4 8.500h22" stroke="#111" strokeWidth="1.300" strokeDasharray="1.500 1.800" />
          <path d="M4 12.500h3M9.500 12.500h10M22 12.500h4" stroke="#111" strokeWidth="1.200" />
        </Svg>
      </TrayIcon>
      <TrayText $w={35}>
        ENG
        <br />
        IN
      </TrayText>
      <TrayText $w={96}>
        4:32
        <br />
        11/11/2020
      </TrayText>
      <Notify>
        <Svg w={20} h={21} vb="0 0 20 21">
          <path d="M0 0h20v17h-9l-3.500 4v-4H0z" fill="#000" />
          <path d="M4 4.500h12M4 8h12M4 11.500h8" stroke="#fff" strokeWidth="1.200" />
        </Svg>
        <CountBadge $x={9} $y={24} $d={21} $bg="#cdd0d1">
          2
        </CountBadge>
      </Notify>
    </Tray>
  </Taskbar>
);

export default function App() {
  return (
    <Screen>
      <GlobalStyle />
      <BrowserChrome />
      <Viewport>
        <Page>
          <Panel>
            <Qualifications />
            <Heading>Verification:</Heading>
            <Declaration>
              <CheckBox />
              The above information given by me is true and correct and nothing has been concealed there in.
            </Declaration>
            <SignRow>
              <DateField>
                <Field placeholder="11/11/2020" disabled />
              </DateField>
              <Signature>
                <SignatureBox>No Signature</SignatureBox>
                <Button $h={42}>Select image</Button>
              </Signature>
            </SignRow>
            <Actions>
              <Button>Show Reciept</Button>
              <Button disabled>Submit</Button>
            </Actions>
          </Panel>
          <SiteFooter />
          <BlueBar />
        </Page>
        <VScroll>
          <ScrollArrow $dir="up" />
          <VThumb />
          <ScrollArrow $dir="down" />
        </VScroll>
      </Viewport>
      <HScroll>
        <ScrollArrow $dir="left" />
        <HThumb />
        <ScrollArrow $dir="right" />
        <ScrollCorner />
      </HScroll>
      <WindowsTaskbar />
    </Screen>
  );
}
